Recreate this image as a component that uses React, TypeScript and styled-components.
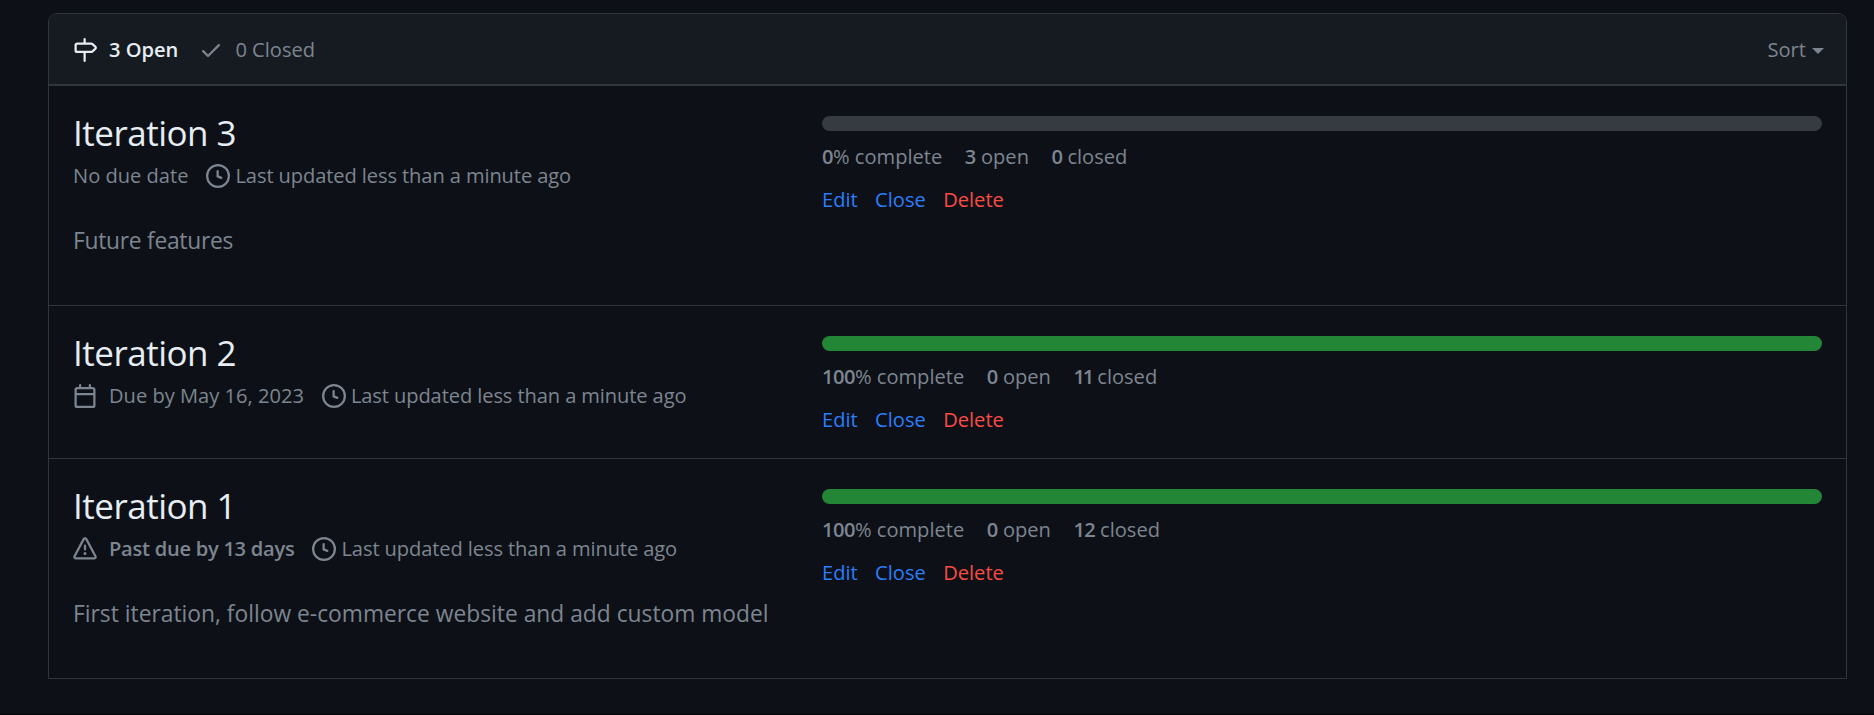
import React from 'react';
import styled, { createGlobalStyle } from 'styled-components';

const GlobalStyle = createGlobalStyle`
  *, *::before, *::after { box-sizing: border-box; }
  body {
    margin: 0;
    background: #0d1117;
    color: #7d8590;
    font-family: 'Open Sans', sans-serif;
    font-size: 20.1px;
    line-height: 30px;
  }
`;

const Page = styled.main`
  height: 715px;
  padding: 13px 27px 0 48px;
  border-bottom: 1px solid #010409;
`;

const Box = styled.section`
  border: 1px solid #30363d;
  border-radius: 9px 9px 0 0;
  overflow: hidden;
`;

const Header = styled.header`
  display: flex;
  align-items: center;
  height: 72px;
  padding: 2px 22px 0 24px;
  background: #161b22;
  border-bottom: 2px solid #30363d;
`;

const Tab = styled.a<{ $selected?: boolean }>`
  display: flex;
  align-items: center;
  gap: 12px;
  margin-right: 21px;
  color: ${(p) => (p.$selected ? '#e6edf3' : '#7d8590')};
  font-weight: ${(p) => (p.$selected ? 600 : 400)};
`;

const Sort = styled.button`
  display: flex;
  align-items: center;
  gap: 6px;
  margin-left: auto;
  padding: 0;
  border: 0;
  background: none;
  color: inherit;
  font: inherit;
`;

const Caret = styled.span`
  border: 6px solid transparent;
  border-top-color: currentColor;
  border-bottom-width: 0;
  margin-top: 1px;
`;

const Row = styled.article<{ $height: number }>`
  display: grid;
  grid-template-columns: 749px 1fr;
  height: ${(p) => p.$height}px;
  padding: 0 24px;

  & + & { border-top: 1px solid #30363d; }
`;

const Details = styled.div`
  padding-top: 22px;
`;

const Title = styled.h2`
  margin: 0 0 1px;
  color: #e6edf3;
  font-size: 35px;
  font-weight: 400;
  line-height: 50px;
  letter-spacing: -0.5px;
`;

const Meta = styled.div`
  display: flex;
  align-items: center;
  height: 34px;
  white-space: nowrap;
`;

const Due = styled.span<{ $late?: boolean }>`
  display: flex;
  align-items: center;
  gap: 12px;
  margin-right: 18px;
  font-weight: ${(p) => (p.$late ? 600 : 400)};
  letter-spacing: ${(p) => (p.$late ? '-0.26px' : '0')};
`;

const Updated = styled.span`
  display: flex;
  align-items: center;
  gap: 5px;
  letter-spacing: -0.1px;
`;

const Description = styled.p<{ $tight?: boolean }>`
  margin: 30px 0 0;
  font-size: 22.8px;
  line-height: 36px;
  letter-spacing: ${(p) => (p.$tight ? '-0.27px' : '0')};
  white-space: nowrap;
`;

const Status = styled.div`
  padding-top: 30px;
`;

const Track = styled.div`
  height: 15px;
  border-radius: 9px;
  background: #363b42;
  overflow: hidden;
`;

const Fill = styled.div`
  height: 100%;
  background: #238636;
`;

const Stats = styled.div`
  display: flex;
  gap: 22.5px;
  margin-top: 11px;
`;

const Count = styled.span<{ $tracking?: number }>`
  font-weight: 600;
  letter-spacing: ${(p) => p.$tracking ?? -0.5}px;
`;

const Actions = styled.div`
  display: flex;
  gap: 17.4px;
  margin-top: 13px;
`;

const Action = styled.a<{ $danger?: boolean }>`
  color: ${(p) => (p.$danger ? '#fa4b44' : '#2b7dfa')};
`;

const Svg = styled.svg`
  flex: none;
  display: block;
  fill: currentColor;
`;

const paths = {
  milestone:
    'M7.75 0a.75.75 0 0 1 .75.75V3h3.634c.414 0 .814.147 1.13.414l2.07 1.75a1.75 1.75 0 0 1 0 2.672l-2.07 1.75a1.75 1.75 0 0 1-1.13.414H8.5v5.25a.75.75 0 0 1-1.5 0V10H2.75A1.75 1.75 0 0 1 1 8.25v-3.5C1 3.784 1.784 3 2.75 3H7V.75A.75.75 0 0 1 7.75 0Zm4.384 8.5a.25.25 0 0 0 .161-.06l2.07-1.75a.248.248 0 0 0 0-.38l-2.07-1.75a.25.25 0 0 0-.161-.06H2.75a.25.25 0 0 0-.25.25v3.5c0 .138.112.25.25.25h9.384Z',
  check:
    'M13.78 4.22a.75.75 0 0 1 0 1.06l-7.25 7.25a.75.75 0 0 1-1.06 0L2.22 9.28a.751.751 0 0 1 .018-1.042.751.751 0 0 1 1.042-.018L6 10.94l6.72-6.72a.75.75 0 0 1 1.06 0Z',
  clock:
    'M8 0a8 8 0 1 1 0 16A8 8 0 0 1 8 0ZM1.5 8a6.5 6.5 0 1 0 13 0 6.5 6.5 0 0 0-13 0Zm7-3.25v2.992l2.028.812a.75.75 0 0 1-.557 1.392l-2.5-1A.751.751 0 0 1 7 8.25v-3.5a.75.75 0 0 1 1.5 0Z',
  calendar:
    'M4.75 0a.75.75 0 0 1 .75.75V2h5V.75a.75.75 0 0 1 1.5 0V2h1.25c.966 0 1.75.784 1.75 1.75v10.5A1.75 1.75 0 0 1 13.25 16H2.75A1.75 1.75 0 0 1 1 14.25V3.75C1 2.784 1.784 2 2.75 2H4V.75A.75.75 0 0 1 4.75 0ZM2.5 7.5v6.75c0 .138.112.25.25.25h10.5a.25.25 0 0 0 .25-.25V7.5Zm10.75-4H2.75a.25.25 0 0 0-.25.25V6h11V3.75a.25.25 0 0 0-.25-.25Z',
  alert:
    'M6.457 1.047c.659-1.234 2.427-1.234 3.086 0l6.082 11.378A1.75 1.75 0 0 1 14.082 15H1.918a1.75 1.75 0 0 1-1.543-2.575Zm1.763.707a.25.25 0 0 0-.44 0L1.698 13.132a.25.25 0 0 0 .22.368h12.164a.25.25 0 0 0 .22-.368Zm.53 3.996v2.5a.75.75 0 0 1-1.5 0v-2.5a.75.75 0 0 1 1.5 0ZM9 11a1 1 0 1 1-2 0 1 1 0 0 1 2 0Z',
};

type IconName = keyof typeof paths;

const Icon = ({ name }: { name: IconName }) => (
  <Svg width="24" height="24" viewBox="0 0 16 16" aria-hidden>
    <path d={paths[name]} />
  </Svg>
);

interface Milestone {
  title: string;
  due: string;
  icon?: IconName;
  late?: boolean;
  description?: string;
  percent: number;
  open: number;
  closed: number;
  height: number;
}

const milestones: Milestone[] = [
  { title: 'Iteration 3', due: 'No due date', description: 'Future features', percent: 0, open: 3, closed: 0, height: 219 },
  { title: 'Iteration 2', due: 'Due by May 16, 2023', icon: 'calendar', percent: 100, open: 0, closed: 11, height: 153 },
  {
    title: 'Iteration 1',
    due: 'Past due by 13 days',
    icon: 'alert',
    late: true,
    description: 'First iteration, follow e-commerce website and add custom model',
    percent: 100,
    open: 0,
    closed: 12,
    height: 220,
  },
];

export default function App() {
  return (
    <Page>
      <GlobalStyle />
      <Box>
        <Header>
          <Tab $selected>
            <Icon name="milestone" />
            3 Open
          </Tab>
          <Tab>
            <Icon name="check" />
            0 Closed
          </Tab>
          <Sort>
            Sort
            <Caret />
          </Sort>
        </Header>
        {milestones.map((m) => (
          <Row key={m.title} $height={m.height}>
            <Details>
              <Title>{m.title}</Title>
              <Meta>
                <Due $late={m.late}>
                  {m.icon && <Icon name={m.icon} />}
                  {m.due}
                </Due>
                <Updated>
                  <Icon name="clock" />
                  Last updated less than a minute ago
                </Updated>
              </Meta>
              {m.description && (
                <Description $tight={m.description.length < 20}>{m.description}</Description>
              )}
            </Details>
            <Status>
              <Track>
                <Fill style={{ width: `${m.percent}%` }} />
              </Track>
              <Stats>
                <span><Count>{m.percent}</Count>% complete</span>
                <span><Count>{m.open}</Count> open</span>
                <span><Count $tracking={m.closed === 11 ? -2.2 : -0.8}>{m.closed}</Count> closed</span>
              </Stats>
              <Actions>
                <Action>Edit</Action>
                <Action>Close</Action>
                <Action $danger>Delete</Action>
              </Actions>
            </Status>
          </Row>
        ))}
      </Box>
    </Page>
  );
}
